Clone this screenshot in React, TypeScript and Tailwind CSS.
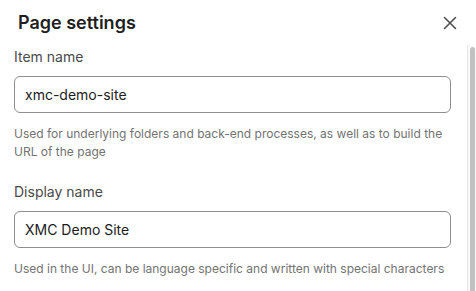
import React from 'react';

interface FieldProps {
  label: string;
  value: string;
  hint: React.ReactNode;
  className?: string;
}

const Field: React.FC<FieldProps> = ({ label, value, hint, className }) => {
  return (
    <div className={className}>
      <label className="block text-[14px] leading-[20px] text-[#4a4a4a]">{label}</label>
      <div className="mt-[9px] h-[37px] rounded-[6px] border border-[#8e8e8e] bg-white px-[10px] flex items-center">
        <span className="text-[14px] leading-[20px] text-[#1c1c1c]">{value}</span>
      </div>
      <p className="mt-[12px] text-[12px] leading-[18px] text-[#737373]">{hint}</p>
    </div>
  );
};

const CloseIcon: React.FC = () => (
  <svg width="14" height="14" viewBox="0 0 14 14" fill="none" className="text-[#4f4f4f]">
    <path d="M1.5 1.5L12.5 12.5M12.5 1.5L1.5 12.5" stroke="currentColor" strokeWidth="1.6" strokeLinecap="round" />
  </svg>
);

const App: React.FC = () => {
  return (
    <div
      className="w-[476px] h-[291px] overflow-hidden bg-white flex flex-col"
      style={{ fontFamily: 'Inter, "Noto Sans", sans-serif' }}
    >
      <div className="h-[45px] shrink-0 flex items-center justify-between pl-[18px] pr-[16px]">
        <h2 className="text-[18px] leading-[28px] font-semibold text-[#1f1f1f]">Page settings</h2>
        <button className="w-[20px] h-[20px] flex items-center justify-center">
          <CloseIcon />
        </button>
      </div>

      <div className="flex flex-1 min-h-0">
        <div className="flex-1 pl-[14px] pr-[16px] pt-[2px]">
          <Field
            label="Item name"
            value="xmc-demo-site"
            hint={
              <>
                Used for underlying folders and back-end processes, as well as to build the
                <br />
                URL of the page
              </>
            }
          />
          <Field
            className="mt-[21px]"
            label="Display name"
            value="XMC Demo Site"
            hint="Used in the UI, can be language specific and written with special characters"
          />
        </div>

        <div className="w-[9px] shrink-0 border-l border-[#e6e6e6] bg-[#fafafa] pt-[2px] pl-[2px] pr-[1px]">
          <div className="h-full rounded-t-[3px] bg-[#c1c1c1]" />
        </div>
      </div>
    </div>
  );
};

export default App;
